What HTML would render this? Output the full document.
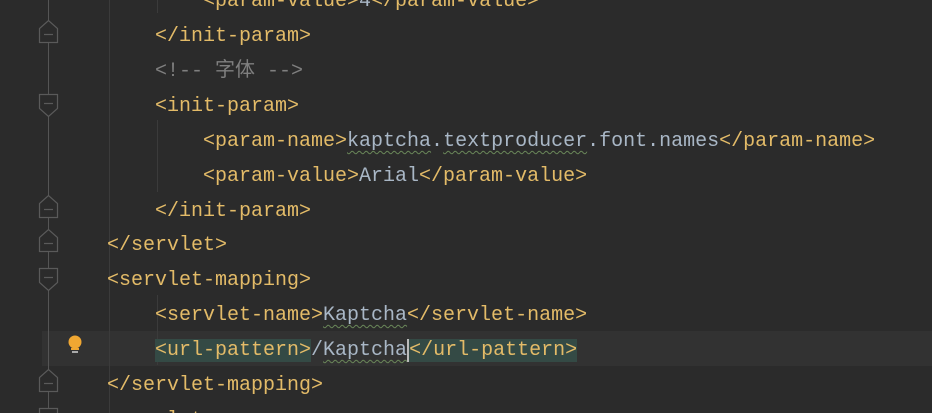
<!DOCTYPE html><html><head><style>
html,body{margin:0;width:932px;height:413px;overflow:hidden}
body{background:#2b2b2b;position:relative;font-family:"Liberation Mono","Noto Sans CJK SC",monospace;font-size:20px}
.l{position:absolute;white-space:pre;line-height:35px;height:35px;color:#e3bb68}
.t{color:#a9b7c6}.c{color:#7f7f7f}
.w{text-decoration:underline wavy #6a8759;text-decoration-thickness:1px;text-underline-offset:4px}
.g{position:absolute;width:1px;background:#3b3b3b}
.hl{background:#344a45}
</style></head><body>
<div style="position:absolute;left:42px;top:331px;width:890px;height:35px;background:#323232"></div>
<div class="g" style="left:48px;top:0;height:413px;background:#555"></div>
<div class="g" style="left:109px;top:0;height:413px"></div>
<div class="g" style="left:157px;top:0;height:13px"></div>
<div class="g" style="left:157px;top:120px;height:72px"></div>
<div class="g" style="left:157px;top:295px;height:70px"></div>
<svg style="position:absolute;left:0;top:0" width="100" height="413">
<g fill="#2b2b2b" stroke="#5a5a5a" stroke-width="1.2">
<path d="M39.5 42.5V28.5L48.5 20.5L57.5 28.5V42.5Z"/>
<path d="M39.5 217.5V203.5L48.5 195.5L57.5 203.5V217.5Z"/>
<path d="M39.5 251.5V237.5L48.5 229.5L57.5 237.5V251.5Z"/>
<path d="M39.5 391.5V377.5L48.5 369.5L57.5 377.5V391.5Z"/>
<path d="M39.5 94.5V108.5L48.5 116.5L57.5 108.5V94.5Z"/>
<path d="M39.5 268.5V282.5L48.5 290.5L57.5 282.5V268.5Z"/>
<path d="M39.5 408.5V420L57.5 420V408.5Z"/>
</g>
<g stroke="#5a5a5a" stroke-width="1.2"><path d="M44 34.5H53M44 209.5H53M44 243.5H53M44 383.5H53M44 103.5H53M44 277.5H53"/></g>
<circle cx="75" cy="342" r="6.5" fill="#f0a732"/><rect x="71" y="348" width="8" height="2" fill="#f0a732"/><rect x="72" y="351" width="6" height="2" fill="#aaa"/>
</svg>
<div class="l" style="left:203px;top:-16px">&lt;param-value&gt;<span class="t">4</span>&lt;/param-value&gt;</div>
<div class="l" style="left:155px;top:19px">&lt;/init-param&gt;</div>
<div class="l c" style="left:155px;top:54px">&lt;!-- 字体 --&gt;</div>
<div class="l" style="left:155px;top:89px">&lt;init-param&gt;</div>
<div class="l" style="left:203px;top:124px">&lt;param-name&gt;<span class="t"><span class="w">kaptcha</span>.<span class="w">textproducer</span>.font.names</span>&lt;/param-name&gt;</div>
<div class="l" style="left:203px;top:159px">&lt;param-value&gt;<span class="t">Arial</span>&lt;/param-value&gt;</div>
<div class="l" style="left:155px;top:194px">&lt;/init-param&gt;</div>
<div class="l" style="left:107px;top:228px">&lt;/servlet&gt;</div>
<div class="l" style="left:107px;top:263px">&lt;servlet-mapping&gt;</div>
<div class="l" style="left:155px;top:298px">&lt;servlet-name&gt;<span class="t w">Kaptcha</span>&lt;/servlet-name&gt;</div>
<div class="l" style="left:155px;top:333px"><span class="hl">&lt;url-pattern&gt;</span><span class="t">/<span class="w">Kaptcha</span></span><span class="hl" style="border-left:2px solid #bbb">&lt;/url-pattern&gt;</span></div>
<div class="l" style="left:107px;top:368px">&lt;/servlet-mapping&gt;</div>
<div class="l" style="left:107px;top:403px;height:10px;overflow:hidden">&lt;servlet&gt;</div>
</body></html>
